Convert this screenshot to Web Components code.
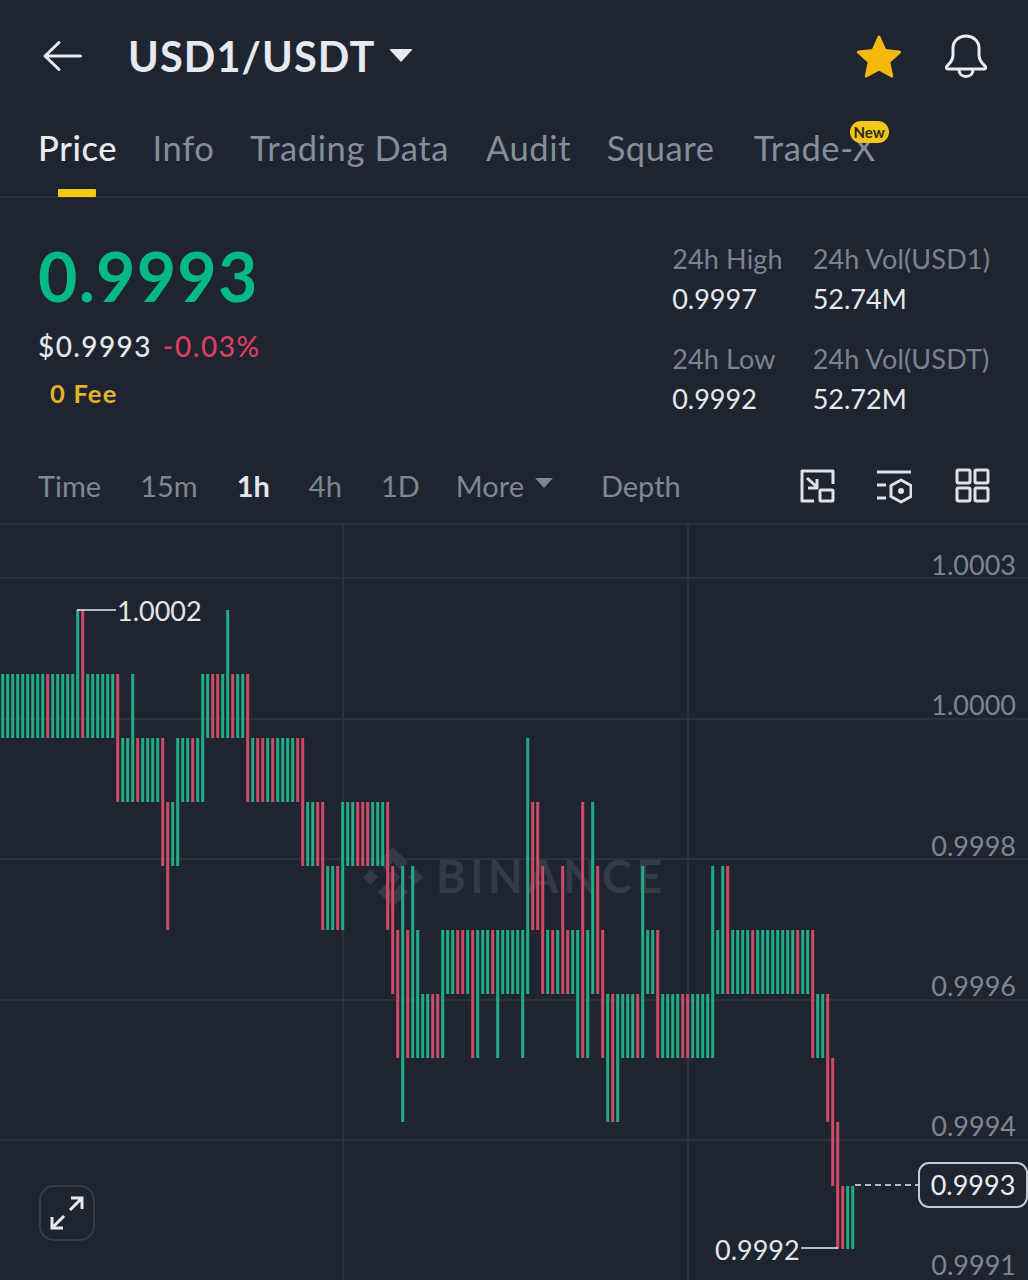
<!DOCTYPE html>
<html><head><meta charset="utf-8"><style>
html,body{margin:0;padding:0;background:#1e2530;height:1280px;overflow:hidden}
body{font-family:Lato,"Open Sans",sans-serif;color:#eaecef}
</style></head><body>
<market-screen>
<top-bar pair="USD1/USDT"></top-bar>
<tab-bar></tab-bar>
<price-panel></price-panel>
<interval-bar></interval-bar>
<kline-chart></kline-chart>
</market-screen>
<script>
function el(name,html){customElements.define(name,class extends HTMLElement{connectedCallback(){if(this.shadowRoot)return;this.attachShadow({mode:'open'}).innerHTML=typeof html==='function'?html(this):html}})}
el('market-screen',`<style>:host{display:flex;flex-direction:column;width:1028px;height:1280px;overflow:hidden}</style><slot></slot>`);
el('top-bar',h=>`<style>:host{display:flex;align-items:center;height:112px;padding:0 40px 0 42px;box-sizing:border-box}
.t{font:700 41.5px Lato,sans-serif;color:#e6e9ef;margin-left:46px;letter-spacing:1.100px}
.c{width:0;height:0;border:12px solid transparent;border-top:13px solid #e6e9ef;border-bottom:0;margin-left:14px;margin-top:-2px;border-radius:2px}
.r{margin-left:auto;display:flex;gap:42px;align-items:center}svg{display:block}</style>
<svg width="40" height="32" viewBox="0 0 40 32" fill="none" stroke="#e6e9ef" stroke-width="3" stroke-linecap="round" stroke-linejoin="round"><path d="M38.5 16H3L17 2.5M3 16l14 13.5"/></svg>
<span class="t">${h.getAttribute('pair')}</span><span class="c"></span>
<div class="r"><svg width="46" height="44" viewBox="0 0 46 44"><path fill="#f5b90c" stroke="#f5b90c" stroke-width="3" stroke-linejoin="round" d="M23 3l6 13.5 14.5 1.6-10.8 9.7 3 14.2L23 35l-12.700 7 3-14.200L2.500 18.100 17 16.500z"/></svg>
<svg width="44" height="44" viewBox="0 0 44 44" fill="none" stroke="#e9ecf1" stroke-width="3" stroke-linejoin="round" stroke-linecap="round"><path d="M4 35c-2 0-2-2-1-3 3-3 6-5 6-11v-7C9 7 15 2 22 2s13 5 13 12v7c0 6 3 8 6 11 1 1 1 3-1 3z"/><path d="M15 36c0 4 3 6.500 7 6.500s7-2.500 7-6.500"/></svg></div>`);
el('tab-bar',()=>`<style>:host{display:flex;position:relative;height:86px;box-sizing:border-box;padding:17px 0 0 38px;gap:35.500px;border-bottom:2px solid #2b3039;font:400 34.500px/38px Lato,sans-serif;letter-spacing:.6px;color:#858d9b}
.on{color:#eaecef;position:relative;font-weight:500}.on i{position:absolute;left:20px;top:60px;width:38px;height:8px;background:#f6c90e;border-radius:1px}
.x{position:relative;margin-left:3.500px}.x b{position:absolute;left:96px;top:-8px;width:39px;height:22px;border-radius:11px;background:#f5c518;color:#2a2a20;font:700 15px/22px Lato,sans-serif;letter-spacing:0;text-align:center}</style>
<span class="on">Price<i></i></span><span>Info</span><span>Trading Data</span><span style="margin-left:1.500px">Audit</span><span>Square</span><span class="x">Trade-X<b>New</b></span>`);
customElements.define('stat-cell',class extends HTMLElement{connectedCallback(){this.attachShadow({mode:'open'}).innerHTML=`<style>:host{display:flex;flex-direction:column;gap:12px}
.l{font:400 27px/28px Lato,sans-serif;color:#7b8390;letter-spacing:.15px}.v{font:400 27px/28px Lato,sans-serif;color:#e6e9ee}</style><span class="l">${this.getAttribute('label')}</span><span class="v">${this.getAttribute('value')}</span>`}});
el('price-panel',()=>`<style>:host{display:flex;justify-content:space-between;height:263px;box-sizing:border-box;padding:44px 38px 0 38px}
.p{font:700 68px/68px Lato,sans-serif;color:#04b986;letter-spacing:1.200px}.u{margin-top:19px;font:500 28px/34px Lato,sans-serif;color:#e6e9ee;display:flex;gap:11px;letter-spacing:1.400px}.u em{font-style:normal;color:#df3f5f;letter-spacing:1.600px}
.f{margin:15px 0 0 12px;font:700 25.500px/30px Lato,sans-serif;color:#e3b32a;letter-spacing:1.200px}.g{display:grid;grid-template-columns:auto auto;column-gap:30px;row-gap:32px;margin-top:3px;height:max-content}</style>
<div><div class="p">0.9993</div><div class="u"><span>$0.9993</span><em>-0.03%</em></div><div class="f">0 Fee</div></div>
<div class="g"><stat-cell label="24h High" value="0.9997"></stat-cell><stat-cell label="24h Vol(USD1)" value="52.74M"></stat-cell><stat-cell label="24h Low" value="0.9992"></stat-cell><stat-cell label="24h Vol(USDT)" value="52.72M"></stat-cell></div>`);
el('interval-bar',()=>`<style>:host{display:flex;align-items:center;height:62px;box-sizing:border-box;padding:0 38px 12px;font:400 29px/34px Lato,sans-serif;color:#7f8795;gap:39px}
.on{color:#e3e6ea;font-weight:700}.m{display:flex;align-items:center;gap:11px;margin-left:-3px}.m i{border:9px solid transparent;border-top:10px solid #7f8795;border-bottom:0;margin-top:-6px}
.ic{margin-left:auto;display:flex;gap:41px;align-items:center}svg{display:block}</style>
<span>Time</span><span>15m</span><span class="on">1h</span><span>4h</span><span>1D</span><span class="m">More<i></i></span><span style="margin-left:9px">Depth</span>
<div class="ic"><svg width="36" height="36" viewBox="0 0 36 36" fill="none" stroke="#dfe3e8" stroke-width="3" stroke-linejoin="round"><path d="M15 33H3V3h31v13"/><rect x="21" y="22" width="13" height="11" rx="1"/><path d="M8 10l10 9"/><path d="M18 11v9H9"/></svg>
<svg style="margin-right:2px" width="36" height="36" viewBox="0 0 36 36" fill="none" stroke="#dfe3e8" stroke-width="3" stroke-linejoin="round"><path d="M1 4h34M1 17h9M1 30h9"/><path d="M25 12l10 5.500v11L25 34l-10-5.500v-11z"/><circle cx="25" cy="23" r="3" fill="#dfe3e8" stroke="none"/></svg>
<svg width="35" height="36" viewBox="0 0 35 36" fill="none" stroke="#dfe3e8" stroke-width="3"><rect x="2" y="2" width="13" height="13" rx="1.500"/><rect x="20" y="2" width="13" height="13" rx="1.500"/><rect x="2" y="20" width="13" height="13" rx="1.500"/><rect x="20" y="20" width="13" height="13" rx="1.500"/></svg></div>`);
/* candle data: [colour, top level, bottom level, count] runs, one bar every 5px */
const L=[610,674,738,802,866,930,994,1058,1122,1186,1249];
const runs=[['g',1,2,9],['r',1,2,1],['g',1,2,5],['g',0,2,1],['r',0,2,1],['g',1,2,6],['r',1,3,1],['g',2,3,2],['g',1,3,1],['r',2,3,1],['g',2,3,4],['r',2,4,1],['r',3,5,1],['g',3,4,1],['g',2,4,1],['g',2,3,2],['r',2,3,1],['g',2,3,1],['g',1,3,1],['g',1,2,1],['r',1,2,2],['g',1,2,1],['g',0,2,1],['r',1,2,1],['g',1,2,2],['r',1,3,1],['g',2,3,1],['r',2,3,2],['g',2,3,1],['r',2,3,1],['g',2,3,4],['r',2,3,1],['r',2,4,1],['g',3,4,2],['r',3,4,1],['r',3,5,1],['g',4,5,2],['r',4,5,1],['g',3,5,1],['g',3,4,2],['r',3,4,3],['g',3,4,3],['r',3,5,1],['r',4,6,1],['r',5,7,1],['g',4,8,1],['r',5,7,1],['g',4,7,1],['g',5,7,1],['g',6,7,2],['r',6,7,2],['g',5,7,1],['g',5,6,2],['r',5,6,2],['g',5,6,1],['r',5,7,1],['g',5,7,1],['g',5,6,2],['r',5,6,1],['g',5,7,1],['g',5,6,4],['g',5,7,1],['g',2,6,1],['r',3,5,2],['r',4,6,1],['g',5,6,1],['r',5,6,1],['g',5,6,1],['r',4,6,1],['r',5,6,1],['g',5,6,1],['g',5,7,1],['r',3,7,1],['g',5,7,1],['g',3,6,1],['r',4,6,1],['r',5,7,1],['g',6,8,1],['r',6,8,1],['g',6,8,1],['g',6,7,3],['r',6,7,1],['g',4,7,1],['g',5,6,2],['r',5,7,1],['g',6,7,4],['r',6,7,2],['g',6,7,4],['g',4,7,1],['g',5,6,1],['g',4,6,1],['r',4,6,1],['g',5,6,4],['r',5,6,1],['g',5,6,8],['r',5,6,1],['g',5,6,2],['r',5,7,1],['g',6,7,2],['r',6,8,1],['r',7,9,1],['r',8,10,1],['r',9,10,1],['g',9,10,2]];
function bars(){let s='',i=0;for(const [c,a,b,n] of runs)for(let k=0;k<n;k++,i++){s+=`<rect x="${1.2+5*i}" y="${L[a]-525}" width="3" height="${L[b]-L[a]}" fill="${c==='g'?'#20ad86':'#cf4a67'}"/>`}return s}
customElements.define('axis-price',class extends HTMLElement{connectedCallback(){this.attachShadow({mode:'open'}).innerHTML=`<style>:host{position:absolute;right:12px;font:400 27px/28px Lato,sans-serif;color:#7d8591}</style><slot></slot>`}});
el('kline-chart',()=>`<style>:host{display:block;position:relative;flex:1;border-top:2px solid #2b3039;box-sizing:border-box}
svg{position:absolute;left:0;top:0;display:block}.wm{font:700 45px Lato,sans-serif;fill:#343a46;letter-spacing:4.500px}
.tag{position:absolute;font:400 27px/30px Lato,sans-serif;color:#e3e6ea}.now{position:absolute;left:918px;top:637px;width:110px;height:46px;box-sizing:border-box;border:2px solid #c5c9cf;border-radius:11px;background:#1e2530;font:400 27px/42px Lato,sans-serif;color:#eaecef;text-align:center}
.ex{position:absolute;left:39px;top:660px;width:56px;height:56px;box-sizing:border-box;border:2px solid #353b46;border-radius:15px}</style>
<svg width="1028" height="755" viewBox="0 0 1028 755"><g stroke="#2c313a" stroke-width="2"><path d="M343 0V755M688 0V755M0 53H1028M0 194H1028M0 334H1028M0 475H1028M0 615H1028"/></g>
<g fill="#343a46" transform="translate(393 352)"><path d="M0-12l-6 6-6-6 12-12 12 12-6 6zM-18-6l6 6-6 6-6-6zM18-6l6 6-6 6-6-6zM0-6l6 6-6 6-6-6zM0 12l6-6 6 6-12 12-12-12 6-6z" transform="scale(1.250)"/></g>
<text class="wm" x="436" y="368">BINANCE</text>${bars()}
<g stroke="#e8ebef" stroke-width="1.500" fill="none"><path d="M77 85H116M801 723H838"/><path d="M855 660H918" stroke-dasharray="6 4"/></g></svg>
<span class="tag" style="left:117px;top:71px">1.0002</span><span class="tag" style="left:715px;top:710px">0.9992</span>
<div class="now">0.9993</div>
<axis-price style="top:26px">1.0003</axis-price><axis-price style="top:166px">1.0000</axis-price><axis-price style="top:307px">0.9998</axis-price><axis-price style="top:447px">0.9996</axis-price><axis-price style="top:587px">0.9994</axis-price><axis-price style="top:726px">0.9991</axis-price>
<div class="ex"><svg style="left:8px;top:8px" width="36" height="36" viewBox="0 0 36 36" fill="none" stroke="#e6e9ee" stroke-width="3"><path d="M22 3h11v11M33 3L21 15M14 33H3V22M3 33l12-12"/></svg></div>`);
</script></body></html>
